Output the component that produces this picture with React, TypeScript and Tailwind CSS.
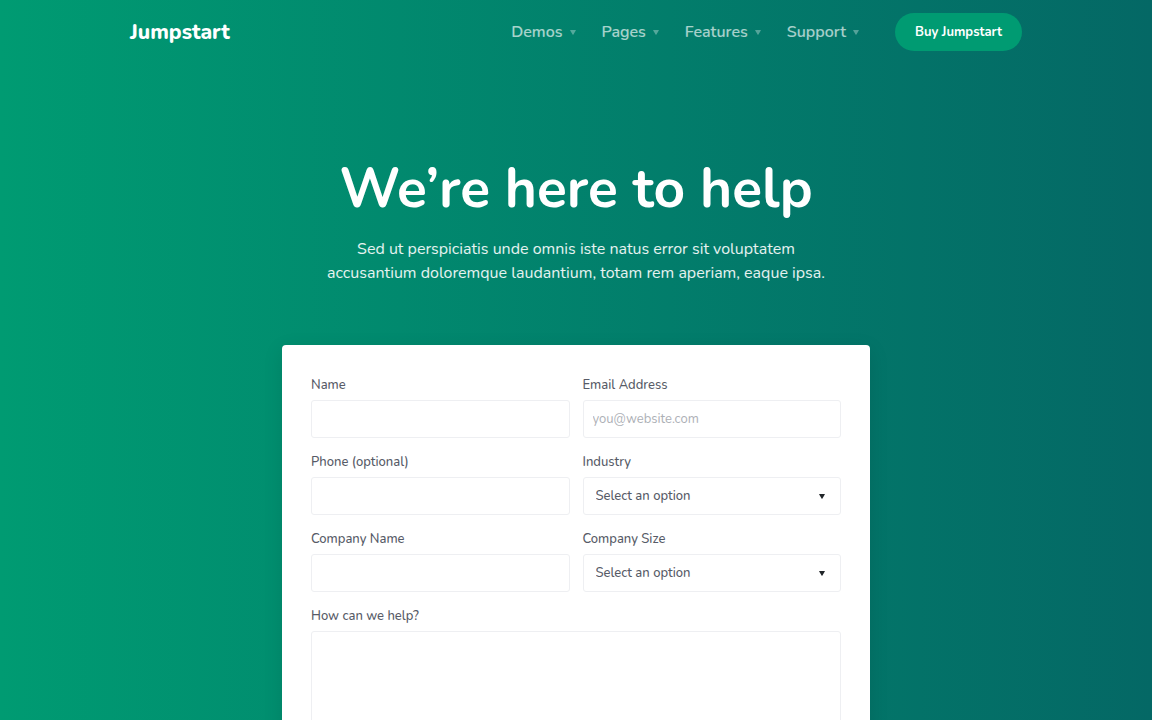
import React from "react";

const navItems = ["Demos", "Pages", "Features", "Support"];

function Caret({ className }: { className: string }) {
  return (
    <svg viewBox="0 0 6 5" aria-hidden="true" className={className}>
      <path d="M.5 0h5q.6 0 .3.5L3.4 4.6q-.4.6-.8 0L.2.5Q-.1 0 .5 0z" fill="currentColor" />
    </svg>
  );
}

const labelClass = "text-[13px] leading-[22px] font-medium text-[#575b67]";
const controlClass =
  "block w-full rounded-[3px] border border-[#eeeff2] bg-white text-[13px] text-[#575b67] outline-none focus:border-[#009b72]";

function TextField({ id, label, type = "text", placeholder }: { id: string; label: string; type?: string; placeholder?: string }) {
  return (
    <div className="flex flex-col gap-1">
      <label htmlFor={id} className={labelClass}>{label}</label>
      <input id={id} name={id} type={type} placeholder={placeholder} className={`${controlClass} h-[38px] px-[9px] placeholder:text-[#adb0b6] placeholder:opacity-100`} />
    </div>
  );
}

function SelectField({ id, label, options }: { id: string; label: string; options: string[] }) {
  return (
    <div className="flex flex-col gap-1">
      <label htmlFor={id} className={labelClass}>{label}</label>
      <div className="relative">
        <select id={id} name={id} defaultValue="" className={`${controlClass} h-[38px] appearance-none pt-[2px] pr-8 pl-3 font-medium`}>
          <option value="">Select an option</option>
          {options.map((option) => (
            <option key={option}>{option}</option>
          ))}
        </select>
        <Caret className="pointer-events-none absolute inset-y-0 right-4 my-auto h-[5px] w-[6px] text-[#212529]" />
      </div>
    </div>
  );
}

export default function App() {
  return (
    <div className="min-h-screen bg-linear-to-r from-[#009b72] to-[#046865] font-['Nunito','Open_Sans',sans-serif] text-white antialiased">
      <header className="mx-auto flex h-16 max-w-[892px] items-center justify-between">
        <a href="#" className="text-[21px] leading-7 font-extrabold">Jumpstart</a>
        <div className="flex items-center gap-9">
          <nav aria-label="Main">
            <ul className="flex items-center gap-[26px]">
              {navItems.map((item) => (
                <li key={item}>
                  <a href="#" className="flex items-center gap-[7px] text-[16px] leading-6 font-semibold text-white/65">
                    {item}
                    <Caret className="h-[5px] w-[6px] opacity-50" />
                  </a>
                </li>
              ))}
            </ul>
          </nav>
          <button type="button" className="h-[38px] rounded-full bg-[#009b72] px-5 text-[13px] leading-5 font-bold">Buy Jumpstart</button>
        </div>
      </header>

      <main className="flex flex-col items-center">
        <section className="flex flex-col items-center pt-[89px] text-center">
          <h1 className="text-[55px] leading-[72px] font-bold">We’re here to help</h1>
          <p className="mt-3 max-w-[520px] text-[16px] leading-6 text-white/90">
            Sed ut perspiciatis unde omnis iste natus error sit voluptatem accusantium doloremque laudantium, totam rem aperiam, eaque ipsa.
          </p>
        </section>

        <form className="mt-[60px] grid w-full max-w-[588px] grid-cols-2 gap-x-[13px] gap-y-[13px] rounded-[4px] bg-white px-[29px] pt-[29px] pb-8 shadow-[0_5px_20px_rgba(0,0,0,0.1)]">
          <TextField id="name" label="Name" />
          <TextField id="email" label="Email Address" type="email" placeholder="you@website.com" />
          <TextField id="phone" label="Phone (optional)" type="tel" />
          <SelectField id="industry" label="Industry" options={["Technology", "Finance", "Education"]} />
          <TextField id="company" label="Company Name" />
          <SelectField id="company-size" label="Company Size" options={["1-10", "11-50", "51+"]} />
          <div className="col-span-2 flex flex-col gap-1">
            <label htmlFor="message" className={labelClass}>How can we help?</label>
            <textarea id="message" name="message" rows={8} className={`${controlClass} resize-none px-[9px] py-2`} />
          </div>
        </form>
      </main>
    </div>
  );
}
